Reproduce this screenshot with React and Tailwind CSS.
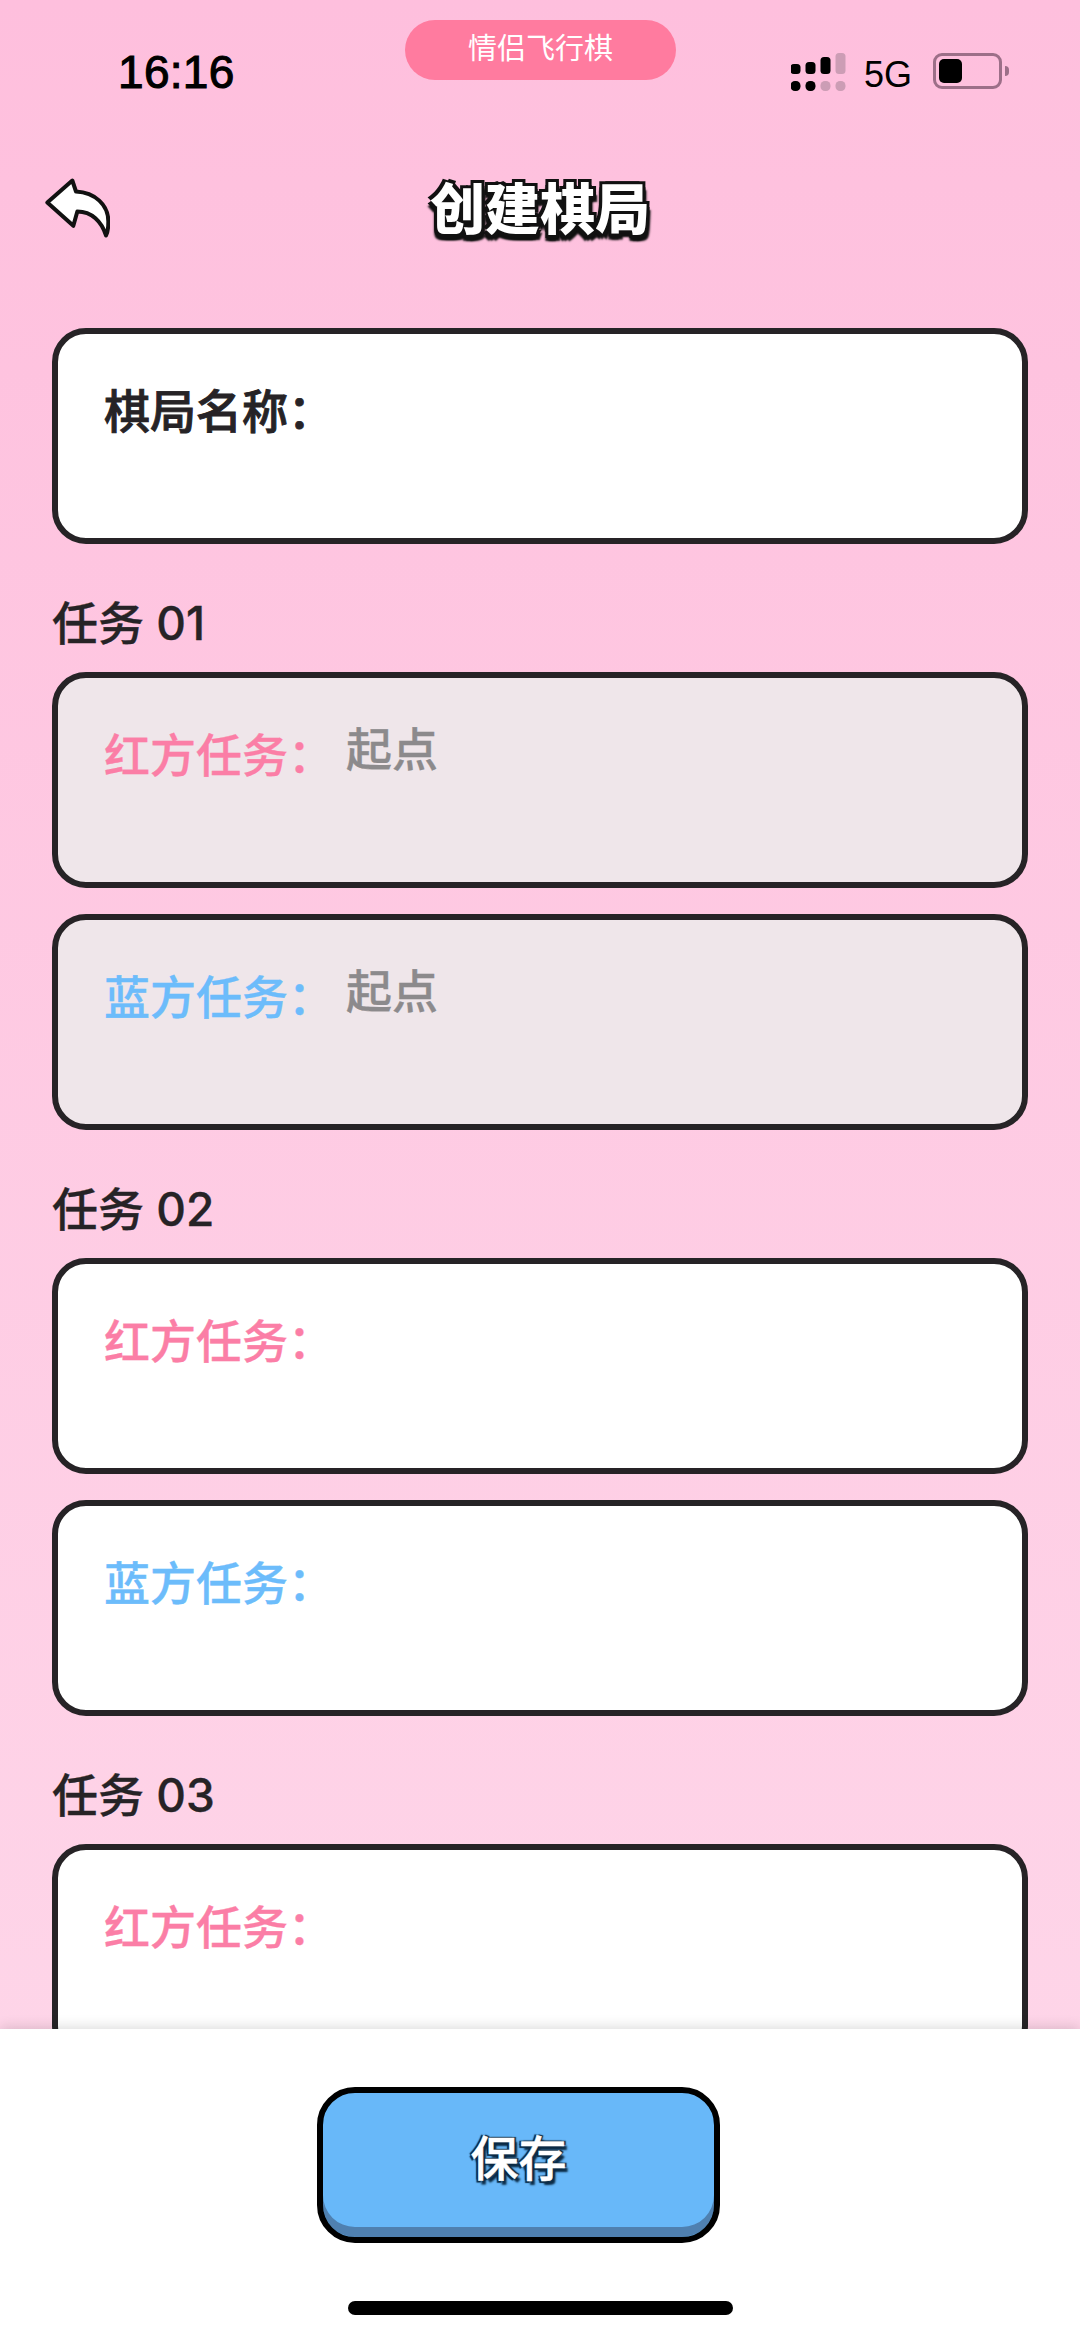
const cjk = 'font-["Inter","Noto_Sans_CJK_SC",sans-serif]';
const heavy = "[-webkit-text-stroke:0.35px_currentColor]";

function Card({ label, color, value, disabled, bold }) {
  return (
    <div className={`h-[216px] rounded-[34px] border-[6px] border-[#262326] pl-[46px] pt-[47px] ${disabled ? "bg-[#efe6ea]" : "bg-white"}`}>
      <div className="flex items-start">
        <span className={`text-[46px] leading-[60px] font-medium ${bold ? "[-webkit-text-stroke:0.9px_currentColor]" : heavy} ${color}`}>{label}</span>
        {value && <span className={`ml-[12px] -mt-[6px] text-[46px] leading-[60px] font-medium text-[#8c8a8c] ${heavy}`}>{value}</span>}
      </div>
    </div>
  );
}

function Section({ title, children }) {
  return (
    <section className="mt-[49px]">
      <h2 className={`h-[79px] text-[46px] leading-[60px] font-medium text-[#262326] ${heavy}`}>{title}</h2>
      <div className="flex flex-col gap-[26px]">{children}</div>
    </section>
  );
}

function Signal() {
  const black = "#000";
  const gray = "#cc9db5";
  return (
    <svg width="56" height="40" viewBox="0 0 56 40" className="block">
      <rect x="-0.5" y="11" width="10" height="10" rx="3.5" fill={black} />
      <rect x="14.5" y="9" width="10" height="12" rx="3.5" fill={black} />
      <rect x="29.5" y="4" width="10" height="17" rx="3.5" fill={black} />
      <rect x="44.5" y="0" width="10" height="21" rx="3.5" fill={gray} />
      <rect x="-0.5" y="28" width="10" height="10" rx="4.5" fill={black} />
      <rect x="14.5" y="28" width="10" height="10" rx="4.5" fill={black} />
      <rect x="29.5" y="28" width="10" height="10" rx="4.5" fill={gray} />
      <rect x="44.5" y="28" width="10" height="10" rx="4.5" fill={gray} />
    </svg>
  );
}

export default function App() {
  return (
    <div className={`relative flex h-[2337px] w-[1080px] flex-col overflow-hidden bg-gradient-to-b from-[#febfdd] to-[#fed8ea] ${cjk}`}>
      <div className="absolute left-[405px] top-[20px] flex h-[60px] w-[271px] items-center justify-center rounded-full bg-[#ff7b9f] pb-[3px] text-[29px] text-white">
        情侣飞行棋
      </div>

      <div className="flex h-[144px] items-start justify-between pl-[118px] pr-[71px] pt-[46px]">
        <span className='font-["Liberation_Sans",sans-serif] text-[46px] leading-[52px] tracking-[0.3px] text-black [-webkit-text-stroke:1.1px_#000]'>16:16</span>
        <div className="flex items-start pt-[7px]">
          <Signal />
          <span className='ml-[17px] mt-[2px] font-["Liberation_Sans",sans-serif] text-[36px] leading-[40px] text-black'>5G</span>
          <div className="ml-[21px] h-[36px] w-[69px] rounded-[9px] border-[3px] border-[#9c6f88] p-[3px]">
            <div className="h-full w-[23px] rounded-[5px] bg-black" />
          </div>
          <div className="mt-[13px] ml-[3px] h-[10px] w-[4px] rounded-r-full bg-[#9c6f88]" />
        </div>
      </div>

      <header className="flex h-[184px] items-start justify-between pl-[40px] pr-[40px] pt-[29px]">
        <svg width="70" height="67" viewBox="60 70 210 200" className="block">
          <path
            d="M82 158 L157 92 L168 125 C225 128 265 165 265 215 C265 235 262 250 258 257 C245 215 215 185 172 185 L160 228 Z"
            fill="#fff"
            stroke="#111"
            strokeWidth="12"
            strokeLinejoin="round"
          />
        </svg>
        <h1 className="mt-[1px] text-[55px] leading-[70px] font-black text-white [text-shadow:-3px_-3px_0_#111,3px_-3px_0_#111,-3px_3px_0_#111,3px_3px_0_#111,0_6px_2px_#111,4px_6px_2px_#111,-3px_6px_2px_#111]">
          创建棋局
        </h1>
        <div className="w-[70px]" />
      </header>

      <main className="min-h-0 flex-1 px-[52px]">
        <Card label="棋局名称：" color="text-[#262326]" bold />
        <Section title="任务 01">
          <Card label="红方任务：" color="text-[#fb7ea6]" value="起点" disabled />
          <Card label="蓝方任务：" color="text-[#6cbcfb]" value="起点" disabled />
        </Section>
        <Section title="任务 02">
          <Card label="红方任务：" color="text-[#fb7ea6]" />
          <Card label="蓝方任务：" color="text-[#6cbcfb]" />
        </Section>
        <Section title="任务 03">
          <Card label="红方任务：" color="text-[#fb7ea6]" />
        </Section>
      </main>

      <footer className="relative flex h-[308px] flex-col items-center bg-white pt-[58px] shadow-[0_-2px_12px_rgba(0,0,0,0.14)]">
        <button className="mr-[43px] h-[156px] w-[403px] rounded-[38px] border-[6px] border-black bg-[#68b8f9] pb-[12px] text-[48px] font-medium text-white shadow-[inset_0_-10px_0_#4f80b0] [-webkit-text-stroke:0.5px_#fff] [text-shadow:-2px_-1px_1px_#0b2a44,2px_-1px_1px_#0b2a44,-2px_2px_1px_#0b2a44,3px_4px_2px_#0b2a44]">
          保存
        </button>
        <div className="mt-[58px] h-[14px] w-[385px] rounded-full bg-black" />
      </footer>
    </div>
  );
}
